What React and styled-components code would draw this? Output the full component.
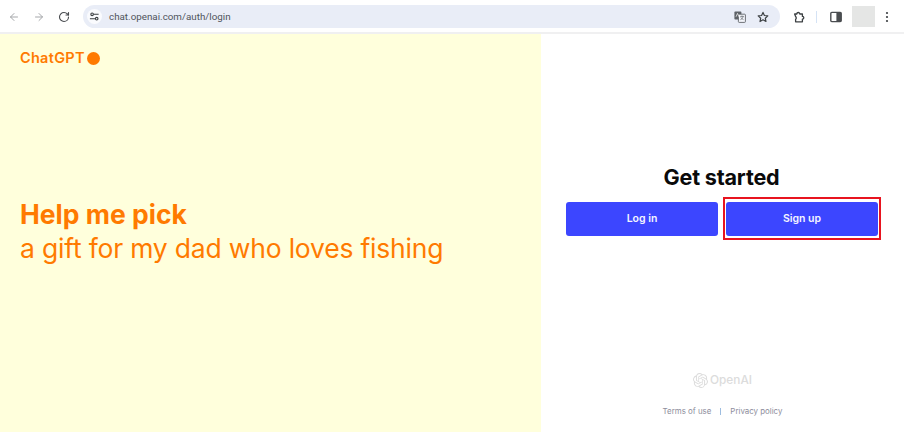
import React from "react";
import styled, { createGlobalStyle } from "styled-components";
import { ArrowLeft, ArrowRight, RotateCw } from "lucide-react";
import { SiOpenai } from "react-icons/si";

const Global = createGlobalStyle`
  html, body { margin: 0; padding: 0; background: #fff; }
  body { font-family: Inter, "Liberation Sans", sans-serif; }
  #root { width: 904px; height: 432px; overflow: hidden; }
`;

const Page = styled.div`
  width: 904px;
  height: 432px;
  display: flex;
  flex-direction: column;
`;

const Toolbar = styled.header`
  height: 31px;
  flex: none;
  box-sizing: content-box;
  padding: 1px 9px 0 8px;
  border-bottom: 2px solid #f0f0f1;
  background: #fff;
  display: flex;
  align-items: center;
`;

const NavIcon = styled.span`
  width: 12px;
  height: 12px;
  flex: none;
  margin-right: ${(p) => p.$gap}px;
  display: flex;
  color: ${(p) => p.$color};
  svg { width: 100%; height: 100%; }
`;

const Omnibox = styled.div`
  width: 697px;
  height: 23px;
  border-radius: 12px;
  background: #e9edf7;
  display: flex;
  align-items: center;
  padding: 0 11px 0 4px;
  box-sizing: border-box;
  margin-left: 13px;
`;

const SiteChip = styled.span`
  width: 15px;
  height: 15px;
  border-radius: 50%;
  background: #fafbfe;
  display: flex;
  align-items: center;
  justify-content: center;
  margin-right: 7px;
  svg { width: 11px; height: 11px; }
`;

const Url = styled.span`
  font: 400 9.8px "Roboto", "Liberation Sans", sans-serif;
  color: #50545c;
  flex: 1;
`;

const BoxIcon = styled.span`
  display: flex;
  flex: none;
  width: 12px;
  height: 12px;
  margin-left: ${(p) => p.$left || 0}px;
  color: #3c4043;
  svg { width: 100%; height: 100%; }
`;

const Divider = styled.span`
  width: 1px;
  height: 12px;
  background: #d5e3f5;
  margin: 0 13px 0 11px;
`;

const Avatar = styled.span`
  width: 23px;
  height: 21px;
  flex: none;
  background: #e5e6e5;
  margin-left: 10px;
`;

const Main = styled.main`
  flex: 1;
  display: flex;
  min-height: 0;
`;

const Promo = styled.section`
  width: 541px;
  flex: none;
  background: #ffffdc;
  color: #ff7a00;
  padding: 15px 20px 0;
  box-sizing: border-box;
  display: flex;
  flex-direction: column;
`;

const Brand = styled.div`
  display: flex;
  align-items: center;
  gap: 2px;
  font: 600 14.5px/18px Inter, "Liberation Sans", sans-serif;
  letter-spacing: 0.28px;
`;

const Dot = styled.span`
  width: 13px;
  height: 13px;
  border-radius: 50%;
  background: #ff7a00;
`;

const Headline = styled.h1`
  margin: 130px 0 0;
  font: 700 26.5px/34px Inter, "Liberation Sans", sans-serif;
  letter-spacing: 0;
`;

const Subline = styled.p`
  margin: 0;
  font: 400 26.5px/34px Inter, "Liberation Sans", sans-serif;
  letter-spacing: -0.2px;
`;

const Auth = styled.section`
  flex: 1;
  display: flex;
  flex-direction: column;
  align-items: center;
  background: #fff;
  padding-top: 130px;
`;

const Title = styled.h2`
  margin: 0 2px 0 0;
  font: 700 21.6px/26px Inter, "Liberation Sans", sans-serif;
  letter-spacing: -0.2px;
  color: #0a0a0a;
`;

const Actions = styled.div`
  display: flex;
  align-items: center;
  gap: 3px;
  margin-top: 7px;
`;

const Slot = styled.div`
  border: 2px solid transparent;
  padding: 3px 0 2px;
`;

const Highlight = styled.div`
  border: 2px solid #e8141f;
  padding: 3px 1px 2px;
`;

const Action = styled.button`
  width: 152px;
  height: 34px;
  border: 0;
  padding: 0 0 1px;
  border-radius: 3px;
  background: #3c46ff;
  color: #f4f5ff;
  font: 600 10.5px Inter, "Liberation Sans", sans-serif;
  display: block;
`;

const Footer = styled.footer`
  margin-top: auto;
  padding-bottom: 16px;
  display: flex;
  flex-direction: column;
  align-items: center;
`;

const Logo = styled.div`
  display: flex;
  align-items: center;
  gap: 2px;
  color: #dcdcdc;
  font: 500 11.8px/16px Inter, "Liberation Sans", sans-serif;
  svg { width: 15px; height: 15px; }
`;

const Links = styled.div`
  margin-top: 18px;
  display: flex;
  align-items: center;
  font: 400 7.9px/10px Inter, "Liberation Sans", sans-serif;
  color: #8d8d9c;
`;

const Sep = styled.span`
  width: 1px;
  height: 7px;
  background: #9dbde0;
  margin: 0 9px;
`;

const TuneIcon = () => (
  <svg viewBox="0 0 12 12" fill="none" stroke="#3c4043" strokeWidth="1.2">
    <circle cx="3.4" cy="3.6" r="1.4" />
    <path d="M5 3.6h5.5M1 8.4h5.5" />
    <circle cx="8.4" cy="8.4" r="1.4" />
  </svg>
);

const TranslateIcon = () => (
  <svg viewBox="0 0 12 12" fill="none">
    <rect x="0.4" y="0.6" width="7" height="8" rx="0.8" fill="#5f6368" />
    <rect x="4.4" y="3.2" width="7" height="8.2" rx="0.8" fill="#f4f6fb" stroke="#5f6368" strokeWidth="0.9" />
    <path d="M6.2 5.4h3.6M8 4.6v.8M9.2 5.4c-.4 1.5-1.4 2.7-2.8 3.3M6.9 6.4c.5 1 1.4 1.8 2.6 2.2" stroke="#5f6368" strokeWidth="0.7" />
    <path d="M2 5.8l1.5-3.4L5 5.8" stroke="#fff" strokeWidth="0.7" />
  </svg>
);

const StarIcon = () => (
  <svg viewBox="0 0 12 12" fill="none" stroke="#3c4043" strokeWidth="1.2" strokeLinejoin="round">
    <path d="M6 1.4l1.4 3.1 3.4.4-2.5 2.3.7 3.3L6 8.8l-3 1.7.7-3.3L1.2 4.9l3.4-.4z" />
  </svg>
);

const ExtensionIcon = () => (
  <svg viewBox="0 0 12 12" fill="none" stroke="#3c4043" strokeWidth="1.3" strokeLinejoin="round">
    <path d="M1.6 3h2.2a1.5 1.5 0 0 1 3 0h2.6v2.4a1.4 1.4 0 0 1 0 2.8v2.6H2.6V8.2a1.6 1.6 0 0 0 0-2.6z" />
  </svg>
);

const SidePanelIcon = () => (
  <svg viewBox="0 0 12 12">
    <rect x="0.8" y="1.4" width="10.4" height="9.2" rx="1" fill="none" stroke="#4a4d50" strokeWidth="1.4" />
    <rect x="6.4" y="1.4" width="4.8" height="9.2" fill="#4a4d50" />
  </svg>
);

const MenuIcon = () => (
  <svg viewBox="0 0 12 12" fill="#3c4043">
    <circle cx="6" cy="2" r="1.1" />
    <circle cx="6" cy="6" r="1.1" />
    <circle cx="6" cy="10" r="1.1" />
  </svg>
);

export default function App() {
  return (
    <Page>
      <Global />
      <Toolbar>
        <NavIcon $gap={13} $color="#a5a7aa"><ArrowLeft strokeWidth={2} /></NavIcon>
        <NavIcon $gap={13} $color="#a5a7aa"><ArrowRight strokeWidth={2} /></NavIcon>
        <NavIcon $gap={0} $color="#46494d"><RotateCw strokeWidth={2.2} /></NavIcon>
        <Omnibox>
          <SiteChip><TuneIcon /></SiteChip>
          <Url>chat.openai.com/auth/login</Url>
          <BoxIcon><TranslateIcon /></BoxIcon>
          <BoxIcon $left={11}><StarIcon /></BoxIcon>
        </Omnibox>
        <BoxIcon $left={13}><ExtensionIcon /></BoxIcon>
        <Divider />
        <BoxIcon><SidePanelIcon /></BoxIcon>
        <Avatar />
        <BoxIcon $left={6}><MenuIcon /></BoxIcon>
      </Toolbar>
      <Main>
        <Promo>
          <Brand>ChatGPT<Dot /></Brand>
          <Headline>Help me pick</Headline>
          <Subline>a gift for my dad who loves fishing</Subline>
        </Promo>
        <Auth>
          <Title>Get started</Title>
          <Actions>
            <Slot><Action>Log in</Action></Slot>
            <Highlight><Action>Sign up</Action></Highlight>
          </Actions>
          <Footer>
            <Logo><SiOpenai />OpenAI</Logo>
            <Links>Terms of use<Sep />Privacy policy</Links>
          </Footer>
        </Auth>
      </Main>
    </Page>
  );
}
